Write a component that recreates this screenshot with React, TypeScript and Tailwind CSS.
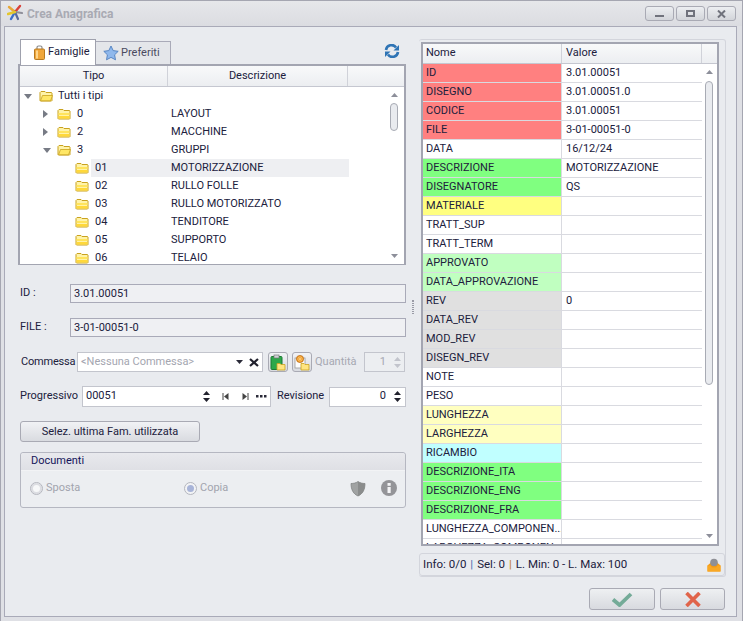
import React from "react";

const Up = ({ c = "#3a3a4a" }: { c?: string }) => (
  <svg width="7" height="4" viewBox="0 0 7 4"><path d="M3.5 0L7 4H0z" fill={c} /></svg>
);
const Down = ({ c = "#3a3a4a" }: { c?: string }) => (
  <svg width="7" height="4" viewBox="0 0 7 4"><path d="M0 0H7L3.5 4z" fill={c} /></svg>
);

const Folder = ({ open }: { open?: boolean }) => (
  <svg width="14" height="12" viewBox="0 0 14 12" className="shrink-0">
    <path d="M1 2.5L2 1.5H6L7 2.5H12.5L13 3V10.5L12.5 11H1.5L1 10.5Z" fill="#fff3a8" stroke="#c9a21f" />
    {open ? (
      <path d="M1.5 10.8L3.5 5.5H13.5L11.5 10.8Z" fill="#ffe766" stroke="#c9a21f" strokeWidth="0.8" />
    ) : (
      <>
        <rect x="1.5" y="5" width="11" height="2" fill="#ffe45c" />
        <rect x="1.5" y="8" width="11" height="2.5" fill="#ffd83a" />
      </>
    )}
  </svg>
);

const Caret = ({ kind }: { kind: "open" | "closed" }) =>
  kind === "open" ? (
    <svg width="8" height="5" viewBox="0 0 8 5" className="shrink-0"><path d="M0 0H8L4 5z" fill="#777b85" /></svg>
  ) : (
    <svg width="5" height="8" viewBox="0 0 5 8" className="shrink-0"><path d="M0 0L5 4L0 8z" fill="#777b85" /></svg>
  );

const treeRows: { lvl: number; caret?: "open" | "closed"; open?: boolean; a: string; b?: string; sel?: boolean }[] = [
  { lvl: 0, caret: "open", open: true, a: "Tutti i tipi" },
  { lvl: 1, caret: "closed", a: "0", b: "LAYOUT" },
  { lvl: 1, caret: "closed", a: "2", b: "MACCHINE" },
  { lvl: 1, caret: "open", open: true, a: "3", b: "GRUPPI" },
  { lvl: 2, a: "01", b: "MOTORIZZAZIONE", sel: true },
  { lvl: 2, a: "02", b: "RULLO FOLLE" },
  { lvl: 2, a: "03", b: "RULLO MOTORIZZATO" },
  { lvl: 2, a: "04", b: "TENDITORE" },
  { lvl: 2, a: "05", b: "SUPPORTO" },
  { lvl: 2, a: "06", b: "TELAIO" },
];

const RED = "bg-[#ff8080]";
const GREEN = "bg-[#80ff80]";
const YEL = "bg-[#ffff80]";
const LGREEN = "bg-[#c0ffc0]";
const GRAY = "bg-[#e0e0e0]";
const LYEL = "bg-[#ffffc0]";
const CYAN = "bg-[#c0ffff]";
const WHITE = "bg-white";

const gridRows: [string, string, string][] = [
  ["ID", "3.01.00051", RED],
  ["DISEGNO", "3.01.00051.0", RED],
  ["CODICE", "3.01.00051", RED],
  ["FILE", "3-01-00051-0", RED],
  ["DATA", "16/12/24", WHITE],
  ["DESCRIZIONE", "MOTORIZZAZIONE", GREEN],
  ["DISEGNATORE", "QS", GREEN],
  ["MATERIALE", "", YEL],
  ["TRATT_SUP", "", WHITE],
  ["TRATT_TERM", "", WHITE],
  ["APPROVATO", "", LGREEN],
  ["DATA_APPROVAZIONE", "", LGREEN],
  ["REV", "0", GRAY],
  ["DATA_REV", "", GRAY],
  ["MOD_REV", "", GRAY],
  ["DISEGN_REV", "", GRAY],
  ["NOTE", "", WHITE],
  ["PESO", "", WHITE],
  ["LUNGHEZZA", "", LYEL],
  ["LARGHEZZA", "", LYEL],
  ["RICAMBIO", "", CYAN],
  ["DESCRIZIONE_ITA", "", GREEN],
  ["DESCRIZIONE_ENG", "", GREEN],
  ["DESCRIZIONE_FRA", "", GREEN],
  ["LUNGHEZZA_COMPONEN...", "", WHITE],
  ["LARGHEZZA_COMPONEN...", "", WHITE],
];

const WinBtn = ({ children }: { children: React.ReactNode }) => (
  <div className="w-[29px] h-[15px] rounded-[3px] border border-[#a9aab4] bg-gradient-to-b from-[#eceef1] to-[#d3d5da] flex items-center justify-center">
    {children}
  </div>
);

const Scrollbar = ({ thumbTop, thumbH, h }: { thumbTop: number; thumbH: number; h: string }) => (
  <div className={`w-[15px] ${h} flex flex-col items-center justify-between py-[6px] bg-white relative shrink-0`}>
    <Up c="#8d8f9a" />
    <div
      className="absolute left-[3px] w-[8px] rounded-[4px] border border-[#a8abb4] bg-[#e9ebef]"
      style={{ top: thumbTop, height: thumbH }}
    />
    <Down c="#8d8f9a" />
  </div>
);

const SmallIconBtn = ({ children }: { children: React.ReactNode }) => (
  <div className="w-[20px] h-[20px] rounded-[3px] border border-[#a9aab4] bg-gradient-to-b from-[#f1f2f5] to-[#d9dbe0] flex items-center justify-center shrink-0">
    {children}
  </div>
);

export default function App() {
  return (
    <div
      className="w-[743px] h-[621px] bg-[#dfe0e5] flex flex-col overflow-hidden border-t border-x border-[#a5a6b1] text-[11px] text-[#20203c]"
      style={{ fontFamily: 'Roboto, Tahoma, sans-serif' }}
    >
      {/* Title */}
      <div className="h-[25px] shrink-0 flex items-center bg-gradient-to-b from-[#e6e7ea] to-[#dbdce1]">
        <svg width="16" height="17" viewBox="0 0 16 17" className="ml-[6px] mb-[2px]">
          <path d="M8 8L2 3" stroke="#e8a838" strokeWidth="2.4" strokeLinecap="round" />
          <path d="M8 8L13 2" stroke="#d8413a" strokeWidth="2.4" strokeLinecap="round" />
          <path d="M8 8L15 9" stroke="#8f8f9a" strokeWidth="2.2" strokeLinecap="round" />
          <path d="M8 8L11 15" stroke="#5a6a9a" strokeWidth="2.2" strokeLinecap="round" />
          <path d="M8 8L4 15" stroke="#3c6ec8" strokeWidth="2.4" strokeLinecap="round" />
          <path d="M8 8L1 10" stroke="#e4c62c" strokeWidth="2.4" strokeLinecap="round" />
        </svg>
        <span className="ml-[4px] font-bold text-[12px] text-[#a9aab3]">Crea Anagrafica</span>
        <div className="ml-auto mr-[6px] flex gap-[2px]">
          <WinBtn><div className="w-[9px] h-[2px] bg-[#70727c] mt-[4px]" /></WinBtn>
          <WinBtn><div className="w-[9px] h-[7px] border-2 border-[#70727c]" /></WinBtn>
          <WinBtn>
            <svg width="9" height="8" viewBox="0 0 9 8"><path d="M1 0.5L8 7.5M8 0.5L1 7.5" stroke="#70727c" strokeWidth="2" /></svg>
          </WinBtn>
        </div>
      </div>

      {/* Body */}
      <div className="ml-[3px] mr-[5px] mb-[4px] flex-1 min-h-0 border border-[#a9aab8] bg-[#e9ebef] flex flex-col">
        <div className="flex flex-1 min-h-0 pt-[12px]">
          {/* Left column */}
          <div className="w-[388px] ml-[13px] shrink-0 flex flex-col">
            {/* Tabs */}
            <div className="h-[25px] flex items-end relative pl-[2px]">
              <div className="h-[26px] w-[76px] bg-white border border-b-0 border-[#9fa1ad] flex items-center pl-[13px] gap-[3px] relative z-10 -mb-px">
                <svg width="11" height="15" viewBox="0 0 11 15">
                  <path d="M3 4V2.5A1.5 1.5 0 0 1 4.5 1h2A1.5 1.5 0 0 1 8 2.5V4" fill="none" stroke="#8a8a8a" strokeWidth="1.2" />
                  <rect x="0.5" y="4" width="10" height="10.5" rx="1" fill="#f0a63a" stroke="#b87a20" />
                  <rect x="2" y="5.5" width="2" height="8" fill="#ffd68a" />
                </svg>
                <span>Famiglie</span>
              </div>
              <div className="h-[23px] w-[75px] bg-[#e4e6ea] border border-b-0 border-l-0 border-[#a9aab8] flex items-center pl-[7px] gap-[2px] text-[#4a4a60]">
                <svg width="16" height="16" viewBox="0 0 16 16">
                  <path d="M8 1l2.2 4.6 5 .7-3.6 3.5.9 5L8 12.4 3.500 14.800l.9-5L.8 6.300l5-.7z" fill="#8fb8ec" stroke="#4f7fbe" strokeWidth="0.9" />
                </svg>
                <span>Preferiti</span>
              </div>
              <svg width="16" height="14" viewBox="0 0 16 14" className="absolute right-[6px] top-[5px]">
                <path d="M2 6A5.500 5.500 0 0 1 12 3.500" fill="none" stroke="#2f74b5" strokeWidth="2.600" />
                <path d="M15 1V6.500H9.500z" fill="#2f74b5" />
                <path d="M14 8A5.500 5.500 0 0 1 4 10.500" fill="none" stroke="#2f74b5" strokeWidth="2.600" />
                <path d="M1 13V7.500H6.500z" fill="#2f74b5" />
              </svg>
            </div>

            {/* Tree */}
            <div className="h-[201px] border-2 border-[#a3a5b1] border-b border-r-2 bg-white overflow-hidden flex flex-col">
              <div className="h-[21px] shrink-0 flex bg-gradient-to-b from-[#f8f9fa] to-[#eceef1] border-b border-[#c5c7d0] text-center leading-[19px]">
                <div className="w-[148px] border-r border-[#d0d2d9]">Tipo</div>
                <div className="w-[180px] border-r border-[#d0d2d9]">Descrizione</div>
                <div className="flex-1" />
              </div>
              <div className="flex flex-1 min-h-0">
                <div className="flex-1 overflow-hidden">
                  {treeRows.map((r) => (
                    <div key={r.a} className="h-[18px] flex items-center relative">
                      {r.sel && <div className="absolute left-[71px] top-0 w-[258px] h-[18px] bg-[#eeeff2]" />}
                      <div className="w-[151px] flex items-center relative shrink-0">
                        <div className={r.lvl === 0 ? "w-[19px] pl-[4px]" : r.lvl === 1 ? "w-[37px] pl-[23px]" : "w-[55px]"}>
                          {r.caret && <Caret kind={r.caret} />}
                        </div>
                        <Folder open={r.open} />
                        <span className={r.lvl === 0 ? "ml-[5px]" : "ml-[6px]"}>{r.a}</span>
                      </div>
                      <span className="relative whitespace-nowrap">{r.b}</span>
                    </div>
                  ))}
                </div>
                <div className="pr-[2px] bg-white shrink-0">
                  <Scrollbar h="h-[177px]" thumbTop={16} thumbH={28} />
                </div>
              </div>
            </div>

            {/* ID / FILE */}
            <div className="flex items-center mt-[19px] ml-[2px] h-[19px]">
              <span className="w-[50px]">ID :</span>
              <div className="flex-1 h-[19px] border border-[#a9aab8] bg-[#eff0f3] pl-[3px] leading-[17px]">3.01.00051</div>
            </div>
            <div className="flex items-center mt-[15px] ml-[2px] h-[19px]">
              <span className="w-[50px]">FILE :</span>
              <div className="flex-1 h-[19px] border border-[#a9aab8] bg-[#eff0f3] pl-[3px] leading-[17px]">3-01-00051-0</div>
            </div>

            {/* Commessa */}
            <div className="flex items-center mt-[15px] ml-[3px] h-[20px]">
              <span className="w-[56px] shrink-0 tracking-[-0.2px]">Commessa</span>
              <div className="w-[186px] h-[20px] border border-[#c3c5cd] bg-white flex items-center pl-[3px] pr-[3px] text-[#a4a6b0] shrink-0">
                <span>&lt;Nessuna Commessa&gt;</span>
                <span className="ml-auto"><Down c="#2a2a38" /></span>
                <svg width="10" height="9" viewBox="0 0 10 9" className="ml-[6px]"><path d="M1 1L9 8M9 1L1 8" stroke="#22222e" strokeWidth="2.200" /></svg>
              </div>
              <div className="ml-[5px]">
                <SmallIconBtn>
                  <svg width="16" height="17" viewBox="0 0 16 17">
                    <rect x="1" y="2.500" width="11" height="13" rx="1" fill="#2da84a" stroke="#1d7a34" />
                    <rect x="4" y="1" width="5" height="3" fill="#d0d4d8" stroke="#777" strokeWidth="0.7" />
                    <path d="M7 9.500H10L11 10.500H15V16H7z" fill="#ffe580" stroke="#c9a21f" strokeWidth="0.8" />
                  </svg>
                </SmallIconBtn>
              </div>
              <div className="ml-[4px]">
                <SmallIconBtn>
                  <svg width="16" height="17" viewBox="0 0 16 17">
                    <rect x="1" y="4" width="10" height="10" fill="#fdfdfd" stroke="#9a9a9a" strokeWidth="0.8" />
                    <circle cx="6" cy="5" r="3.600" fill="#ef9b2d" stroke="#b96a12" strokeWidth="0.7" />
                    <path d="M6 2V8M3 5H9M4 3L8 7M8 3L4 7" stroke="#ffd27a" strokeWidth="0.6" />
                    <path d="M7 9.500H10L11 10.500H15V16H7z" fill="#ffe580" stroke="#c9a21f" strokeWidth="0.8" />
                  </svg>
                </SmallIconBtn>
              </div>
              <span className="ml-[3px] text-[#a6a8b2]">Quantità</span>
              <div className="ml-auto mr-[1px] w-[41px] h-[20px] border border-[#c3c5cd] bg-[#eceef1] flex items-center justify-end pr-[3px] text-[#a6a8b2]">
                <span className="mr-[8px]">1</span>
                <div className="flex flex-col gap-[3px]"><Up c="#c2c4cc" /><Down c="#c2c4cc" /></div>
              </div>
            </div>

            {/* Progressivo */}
            <div className="flex items-center mt-[14px] ml-[2px] h-[21px]">
              <span className="w-[62px] shrink-0">Progressivo</span>
              <div className="w-[189px] h-[21px] border border-[#c3c5cd] bg-white flex items-center pl-[3px] pr-[2px] shrink-0">
                <span>00051</span>
                <div className="ml-auto flex flex-col gap-[3px]"><Up c="#22222e" /><Down c="#22222e" /></div>
                <svg width="7" height="7" viewBox="0 0 7 7" className="ml-[12px]"><path d="M1 0V7" stroke="#444" /><path d="M6.500 0V7L2 3.500z" fill="#444" /></svg>
                <svg width="7" height="7" viewBox="0 0 7 7" className="ml-[13px]"><path d="M6 0V7" stroke="#444" /><path d="M0.500 0V7L5 3.500z" fill="#444" /></svg>
                <svg width="11" height="3" viewBox="0 0 11 3" className="ml-[7px] mr-[1px]"><path d="M0 0H2.500V2.500H0zM4 0H6.500V2.500H4zM8 0H10.500V2.500H8z" fill="#2a2a38" /></svg>
              </div>
              <span className="ml-[6px] shrink-0">Revisione</span>
              <div className="ml-auto w-[77px] h-[20px] border border-[#c3c5cd] bg-white flex items-center justify-end pr-[4px]">
                <span className="mr-[8px]">0</span>
                <div className="flex flex-col gap-[3px]"><Up c="#22222e" /><Down c="#22222e" /></div>
              </div>
            </div>

            {/* Button */}
            <div className="mt-[14px] ml-[2px] w-[180px] h-[21px] rounded-[3px] border border-[#a9aab4] bg-gradient-to-b from-[#f1f2f5] to-[#d9dbe0] text-center leading-[19px]">
              Selez. ultima Fam. utilizzata
            </div>

            {/* Group */}
            <div className="mt-[10px] ml-[2px] h-[56px] rounded-[3px] border border-[#b5b7c1] flex flex-col bg-[#eceef1]">
              <div className="h-[18px] shrink-0 bg-gradient-to-b from-[#e8e9ed] to-[#dfe0e5] border-b border-[#f2f3f5] pl-[10px] leading-[16px] text-[#14145a] rounded-t-[3px]">
                Documenti
              </div>
              <div className="flex-1 flex items-center text-[#a2a4ae] pl-[9px] pb-[2px]">
                <div className="w-[154px] flex items-center gap-[3px]">
                  <span className="w-[13px] h-[13px] rounded-full border border-[#b4b6be] bg-[#f7f8f9] shadow-[inset_0_0_0_2px_#dcdde2]" />
                  <span>Sposta</span>
                </div>
                <div className="flex items-center gap-[3px]">
                  <span className="w-[13px] h-[13px] rounded-full border border-[#b4b6be] bg-[#f2f3f5] flex items-center justify-center">
                    <span className="w-[7px] h-[7px] rounded-full bg-[#a8b4d8]" />
                  </span>
                  <span>Copia</span>
                </div>
                <svg width="16" height="17" viewBox="0 0 16 17" className="ml-auto">
                  <path d="M8 1.500C10 3 12.500 3.500 15 3.500C15 10 12.500 14 8 16C3.500 14 1 10 1 3.500C3.500 3.500 6 3 8 1.500Z" fill="#a0a2a2" stroke="#7a7c7c" strokeWidth="0.7" />
                  <path d="M8 1.500V16C12.500 14 15 10 15 3.500C12.500 3.500 10 3 8 1.500Z" fill="#8a8c8c" />
                </svg>
                <svg width="16" height="16" viewBox="0 0 16 16" className="ml-[15px] mr-[8px]">
                  <circle cx="8" cy="8" r="8" fill="#949498" />
                  <rect x="6.500" y="7" width="3.200" height="6" fill="#f4f4f6" />
                  <rect x="6.500" y="3" width="3.200" height="2.800" fill="#f4f4f6" />
                </svg>
              </div>
            </div>
          </div>

          {/* Splitter */}
          <div className="w-[13px] shrink-0 flex justify-center pl-[1px]">
            <div className="mt-[261px] w-[2px] h-[14px] border-x border-dotted border-[#9a9ba6]" />
          </div>

          {/* Right column */}
          <div className="w-[307px] h-[538px] shrink-0 rounded-[3px] border border-[#d3d5dc] border-l-0 flex flex-col">
            <div className="ml-[2px] mt-[2px] w-[298px] h-[504px] border-[2px] border-[#a3a5b1] bg-white overflow-hidden flex flex-col">
              <div className="h-[20px] shrink-0 flex bg-gradient-to-b from-[#f8f9fa] to-[#eceef1] border-b border-[#c5c7d0] leading-[18px]">
                <div className="w-[139px] border-r border-[#d0d2d9] pl-[3px]">Nome</div>
                <div className="w-[140px] border-r border-[#d0d2d9] pl-[4px]">Valore</div>
                <div className="flex-1" />
              </div>
              <div className="flex flex-1 min-h-0">
                <div className="w-[279px] overflow-hidden">
                  {gridRows.map(([n, v, c]) => (
                    <div key={n} className="h-[19px] flex border-b border-[#d9dae0] leading-[17px]">
                      <div className={`w-[139px] shrink-0 border-r border-[#d9dae0] pl-[3px] whitespace-nowrap overflow-hidden ${c}`}>{n}</div>
                      <div className="flex-1 pl-[4px] bg-white">{v}</div>
                    </div>
                  ))}
                </div>
                <Scrollbar h="h-[480px]" thumbTop={17} thumbH={304} />
              </div>
            </div>
            {/* Status */}
            <div className="mt-[7px] h-[23px] w-[306px] rounded-[3px] border border-[#d3d5dc] flex items-center pl-[3px] pr-[3px] text-[11.5px]">
              <span>Info: 0/0</span>
              <span className="mx-[4px] text-[#3f6fb0]">|</span>
              <span>Sel: 0</span>
              <span className="mx-[4px] text-[#c07a2a]">|</span>
              <span>L. Min: 0 - L. Max: 100</span>
              <svg width="14" height="14" viewBox="0 0 14 14" className="ml-auto">
                <path d="M0.500 7.500L4 4.500H10L13.500 7.500V13.500H0.500z" fill="#f49a12" />
                <circle cx="7" cy="4.500" r="3.800" fill="#8f9096" />
                <path d="M0.500 7.500H3.500L5 9.500H9L10.500 7.500H13.500V13.500H0.500z" fill="#f9a825" />
              </svg>
            </div>
          </div>
        </div>

        {/* Footer */}
        <div className="h-[28px] shrink-0 flex justify-end items-start gap-[5px] pr-[11px]">
          <div className="w-[66px] h-[22px] rounded-[3px] border border-[#a9aab4] bg-gradient-to-b from-[#eef0f2] to-[#d8dadf] flex items-center justify-center">
            <svg width="22" height="15" viewBox="0 0 22 15"><path d="M2 7.500L8.500 13L20 2" fill="none" stroke="#74ab98" strokeWidth="3.800" /></svg>
          </div>
          <div className="w-[65px] h-[22px] rounded-[3px] border border-[#a9aab4] bg-gradient-to-b from-[#eef0f2] to-[#d8dadf] flex items-center justify-center">
            <svg width="16" height="15" viewBox="0 0 16 15"><path d="M1.500 1L14.500 14M14.500 1L1.500 14" stroke="#e0644a" strokeWidth="3.600" /></svg>
          </div>
        </div>
      </div>
    </div>
  );
}
